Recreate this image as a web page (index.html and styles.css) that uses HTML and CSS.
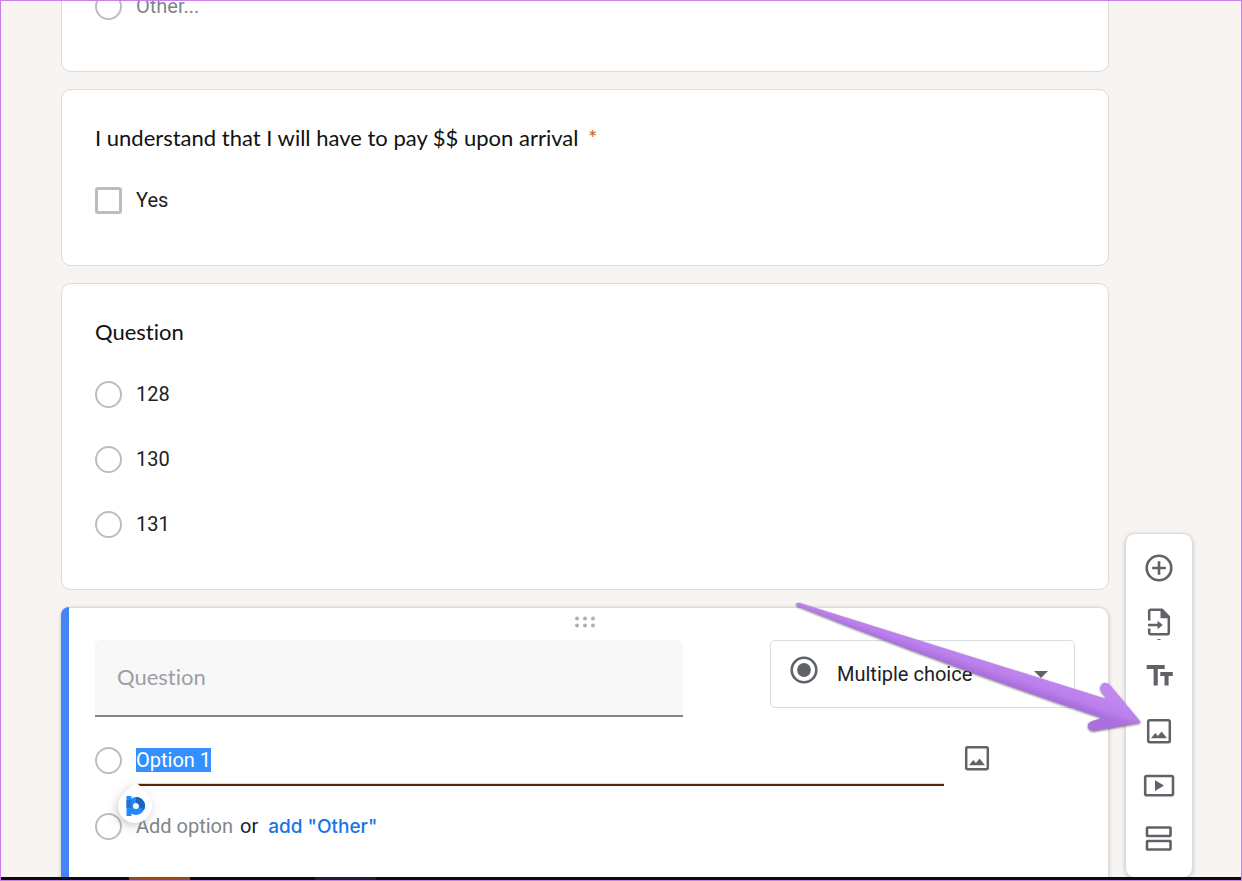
FILE: index.html
```html
<!DOCTYPE html>
<html lang="en">
<head>
    <meta charset="UTF-8">
    <meta name="viewport" content="width=device-width, initial-scale=1.0">
    <title>Form editor</title>
    <link rel="stylesheet" href="styles.css">
</head>
<body>
    <main class="editor">
        <form class="cards">
            <section class="card">
                <label class="option muted"><input type="radio" name="first"> Other...</label>
            </section>

            <section class="card">
                <h2>I understand that I will have to pay $$ upon arrival <span class="required">*</span></h2>
                <label class="option"><input type="checkbox" name="agree"> Yes</label>
            </section>

            <section class="card">
                <h2>Question</h2>
                <div class="options">
                    <label class="option"><input type="radio" name="number"> 128</label>
                    <label class="option"><input type="radio" name="number"> 130</label>
                    <label class="option"><input type="radio" name="number"> 131</label>
                </div>
            </section>

            <section class="card active">
                <div class="drag-handle">
                    <svg width="20" height="12" viewBox="0 0 20 12" fill="#b0b0b0">
                        <circle cx="2" cy="2.5" r="2"/><circle cx="10" cy="2.5" r="2"/><circle cx="18" cy="2.5" r="2"/>
                        <circle cx="2" cy="9.5" r="2"/><circle cx="10" cy="9.5" r="2"/><circle cx="18" cy="9.5" r="2"/>
                    </svg>
                </div>
                <div class="question-row">
                    <input type="text" class="question-input" placeholder="Question" aria-label="Question">
                    <div class="type-select">
                        <svg class="type-icon" width="28" height="28" viewBox="0 0 28 28">
                            <circle cx="14" cy="14" r="12.3" fill="none" stroke="#5f6368" stroke-width="2.6"/>
                            <circle cx="14" cy="14" r="6.9" fill="#5f6368"/>
                        </svg>
                        <select aria-label="Question type">
                            <option>Multiple choice</option>
                            <option>Checkboxes</option>
                            <option>Dropdown</option>
                        </select>
                        <svg width="14" height="7" viewBox="0 0 14 7"><path d="M0 0h14L7 7z" fill="#5f6368"/></svg>
                    </div>
                </div>
                <div class="option-edit">
                    <input type="radio" name="new" aria-label="Option 1">
                    <input type="text" class="option-input" id="option-1" value="Option 1" aria-label="Option text">
                    <button type="button" class="icon-btn" aria-label="Add image to option">
                        <svg width="32" height="32" viewBox="0 0 32 32">
                            <rect x="5.2" y="5.2" width="21.6" height="22" rx="1.5" fill="none" stroke="#5f6368" stroke-width="2.5"/>
                            <path d="M8 23.3l4.3-5.2 2.6 3 3.7-4.6 5.4 6.8z" fill="#5f6368"/>
                        </svg>
                    </button>
                    <svg class="badge" width="56" height="62" viewBox="0 0 56 62">
                        <path class="drop" d="M29 8C34 14 45 19 45 32A17 17 0 1 1 11 32C11 22 23 14 29 8z"/>
                        <circle cx="29" cy="32" r="6" fill="none" stroke="#2589fb" stroke-width="6"/>
                        <path d="M29 26a6 6 0 0 1 5.500 8.500" fill="none" stroke="#1766bd" stroke-width="6"/>
                        <path d="M19.500 22h5v20h-5z" fill="#2589fb"/>
                        <path d="M19.500 26h5v8h-5z" fill="#1f74d3"/>
                    </svg>
                </div>
                <div class="option add-row">
                    <input type="radio" name="new" aria-label="New option">
                    <button type="button" class="add-option">Add option</button>
                    <span class="or">or</span>
                    <button type="button" class="add-other">add "Other"</button>
                </div>
            </section>
        </form>

        <aside class="toolbar">
            <button type="button" class="icon-btn" aria-label="Add question">
                <svg width="32" height="32" viewBox="0 0 32 32" fill="none" stroke="#5f6368" stroke-width="2.6">
                    <circle cx="16" cy="16" r="12.3"/>
                    <path d="M16 9.200v13.600M9.200 16h13.600"/>
                </svg>
            </button>
            <button type="button" class="icon-btn" aria-label="Import questions">
                <svg width="32" height="32" viewBox="0 0 32 32">
                    <path d="M6.200 14.500V5.300q0-1.500 1.500-1.500H19l6.800 7v16q0 1.500-1.500 1.500H7.700q-1.500 0-1.500-1.500v-4.300M5 19h10" fill="none" stroke="#5f6368" stroke-width="2.500"/>
                    <path d="M17.500 3l9.300 9.300h-9.300zM14.500 14.800l5.300 4.200-5.300 4.200z" fill="#5f6368"/>
                    <path d="M14.500 33.500h3" stroke="#5f6368"/>
                </svg>
            </button>
            <button type="button" class="icon-btn" aria-label="Add title and description">
                <svg width="32" height="32" viewBox="0 0 32 32" fill="#5f6368">
                    <path d="M3.700 5h18v4h-6.900v16.500h-4.200V9H3.700z"/>
                    <path d="M17.300 12h12.500v4h-4.200v9.500h-4.100V16h-4.200z"/>
                </svg>
            </button>
            <button type="button" class="icon-btn" aria-label="Add image">
                <svg width="32" height="32" viewBox="0 0 32 32">
                    <rect x="5.2" y="6.2" width="21.6" height="22" rx="1.5" fill="none" stroke="#5f6368" stroke-width="2.5"/>
                    <path d="M8 24.3l4.3-5.2 2.6 3 3.7-4.6 5.4 6.8z" fill="#5f6368"/>
                </svg>
            </button>
            <button type="button" class="icon-btn" aria-label="Add video">
                <svg width="32" height="32" viewBox="0 0 32 32">
                    <rect x="2.2" y="8" width="27.8" height="19.2" rx="1.5" fill="none" stroke="#5f6368" stroke-width="2.6"/>
                    <path d="M12 12.300l9 5.300-9 5.300z" fill="#5f6368"/>
                </svg>
            </button>
            <button type="button" class="icon-btn" aria-label="Add section">
                <svg width="32" height="32" viewBox="0 0 32 32" fill="none" stroke="#5f6368" stroke-width="2.600">
                    <rect x="4" y="5.500" width="23.500" height="8.500" rx=".5"/>
                    <rect x="4" y="19" width="23.500" height="8.500" rx=".5"/>
                </svg>
            </button>
        </aside>
    </main>

    <footer class="taskbar">
        <span class="task orange"></span>
        <span class="task blue"></span>
    </footer>

    <!-- callout pointing at the image button -->
    <svg class="arrow" width="352" height="136" viewBox="-4 0 352 136">
        <defs>
            <linearGradient id="purple" gradientUnits="userSpaceOnUse" x1="270" y1="82" x2="261" y2="108">
                <stop offset="0" stop-color="#c086f2"/>
                <stop offset=".45" stop-color="#bb80ec"/>
                <stop offset=".7" stop-color="#ab70dd"/>
                <stop offset="1" stop-color="#ab70dd"/>
            </linearGradient>
        </defs>
        <path d="M-1 3q1-2 4-1L310 98l-6-8q-2-4 1-7t8 1L343 120q1 2-1 2l-45 8q-5 0-6-4t4-6l10-3Q150 65 0 5z" fill="url(#purple)"/>
    </svg>

    <script>
        const option = document.getElementById('option-1');
        option.focus();
        option.select();
    </script>
</body>
</html>
```
FILE: styles.css
```css
* {
    box-sizing: border-box;
}
body {
    position: relative;
    display: flex;
    flex-direction: column;
    height: 100vh;
    margin: 0;
    border: 1px solid #c980ec;
    background: #f8f4f1;
    color: #202124;
    font-family: Roboto, "Liberation Sans", sans-serif;
    font-size: 20px;
    overflow: hidden;
}
.editor {
    flex: 1;
    min-height: 0;
    display: grid;
    grid-template-columns: 1fr 68px;
    grid-template-rows: 100%;
    gap: 16px;
    padding: 0 48px 0 60px;
    overflow: hidden;
}

/* Cards */
.cards {
    display: flex;
    flex-direction: column;
    gap: 17px;
    margin-top: -42px;
}
.card {
    flex: none;
    padding: 33px 33px 51px;
    background: #fff;
    border: 1px solid #dadce0;
    border-radius: 10px;
}
h2 {
    margin: 0 0 34px;
    font-family: Lato, "Open Sans", sans-serif;
    font-size: 22px;
    font-variant-ligatures: none;
    font-weight: 400;
    line-height: 30px;
    color: #111;
}
.required {
    margin-left: 4px;
    color: #c0692c;
}
.options {
    display: flex;
    flex-direction: column;
    gap: 38px;
}
.option {
    display: flex;
    align-items: center;
    gap: 14px;
    line-height: 27px;
}
.muted {
    color: #80868b;
}
input[type="radio"],
input[type="checkbox"] {
    appearance: none;
    flex: none;
    width: 27px;
    height: 27px;
    margin: 0;
    border: 2px solid #bdbdbd;
    border-radius: 50%;
}
input[type="checkbox"] {
    border-width: 3px;
    border-radius: 3px;
}

/* Card being edited */
.active {
    position: relative;
    padding-top: 0;
    box-shadow: 0 1px 4px rgba(0, 0, 0, 0.2);
}
.active::before {
    content: "";
    position: absolute;
    top: -1px;
    bottom: -1px;
    left: -1px;
    width: 8px;
    background: #4285f4;
    border-radius: 10px 0 0 10px;
}
.drag-handle {
    display: flex;
    justify-content: center;
    height: 32px;
    padding-top: 8px;
}
.question-row {
    display: flex;
    align-items: flex-start;
    gap: 87px;
}
.question-input {
    flex: 1;
    min-width: 0;
    height: 77px;
    padding: 0 22px 2px;
    background: #f8f8f8;
    border: 0;
    border-bottom: 2px solid #80868b;
    border-radius: 6px 6px 0 0;
    font-family: Lato, "Open Sans", sans-serif;
    font-size: 22px;
    font-variant-ligatures: none;
}
.question-input::placeholder {
    color: #9aa0a6;
}
.type-select {
    display: flex;
    align-items: center;
    width: 305px;
    height: 68px;
    padding: 0 26px 0 19px;
    border: 1px solid #dadce0;
    border-radius: 5px;
}
.type-icon {
    align-self: flex-start;
    margin-top: 15px;
}
.type-select select {
    appearance: none;
    flex: 1;
    height: 66px;
    padding: 0 0 0 19px;
    border: 0;
    background: none;
    color: #202124;
    font: inherit;
}
.option-edit {
    position: relative;
    display: flex;
    align-items: center;
    margin-top: 18px;
    height: 51px;
}
.option-input {
    flex: 1;
    height: 51px;
    min-width: 0;
    margin: 0 17px 0 14px;
    padding: 0;
    border: 0;
    border-bottom: 2px solid #5c2408;
    box-shadow: inset 0 -1px #dadce0;
    outline: 0;
    font: inherit;
}
.option-input::selection {
    background: #3390ff;
    color: #fff;
}
.option-edit .icon-btn {
    margin-right: 82px;
    padding-bottom: 5px;
}
.badge {
    position: absolute;
    top: 39px;
    left: 12px;
    pointer-events: none;
}
.drop {
    fill: #fff;
    filter: drop-shadow(-2px 3px 5px rgba(0, 0, 0, 0.2));
}
.add-row {
    margin-top: 27px;
    gap: 0;
}
.add-row button {
    padding: 0;
    border: 0;
    background: none;
    font: inherit;
    cursor: pointer;
}
.add-row .add-option {
    margin-left: 14px;
    color: #80868b;
}
.or {
    margin: 0 10px 0 7px;
}
.add-row .add-other {
    color: #1a73e8;
    font-family: Inter, Roboto, sans-serif;
    font-size: 19px;
    font-weight: 500;
}

/* Floating toolbar */
.icon-btn {
    display: flex;
    align-items: center;
    justify-content: center;
    padding: 0;
    border: 0;
    background: none;
    cursor: pointer;
}
.icon-btn svg {
    overflow: visible;
}
.toolbar {
    align-self: end;
    margin-bottom: -1px;
    padding: 7px 0 12px;
    background: #fff;
    border: 1px solid #dadce0;
    border-radius: 10px;
    box-shadow: 0 1px 4px rgba(0, 0, 0, 0.2);
}
.toolbar .icon-btn {
    width: 100%;
    height: 54px;
}

.taskbar {
    display: flex;
    gap: 125px;
    height: 3px;
    padding-left: 128px;
    background: #0c0c0c;
}
.task {
    width: 61px;
}
.orange {
    background: #984c10;
}
.blue {
    background: #1f1d2e;
}

.arrow {
    position: absolute;
    right: 96px;
    bottom: 143px;
    filter: drop-shadow(0 1px 1px rgba(0, 0, 0, 0.5));
    pointer-events: none;
}
```
